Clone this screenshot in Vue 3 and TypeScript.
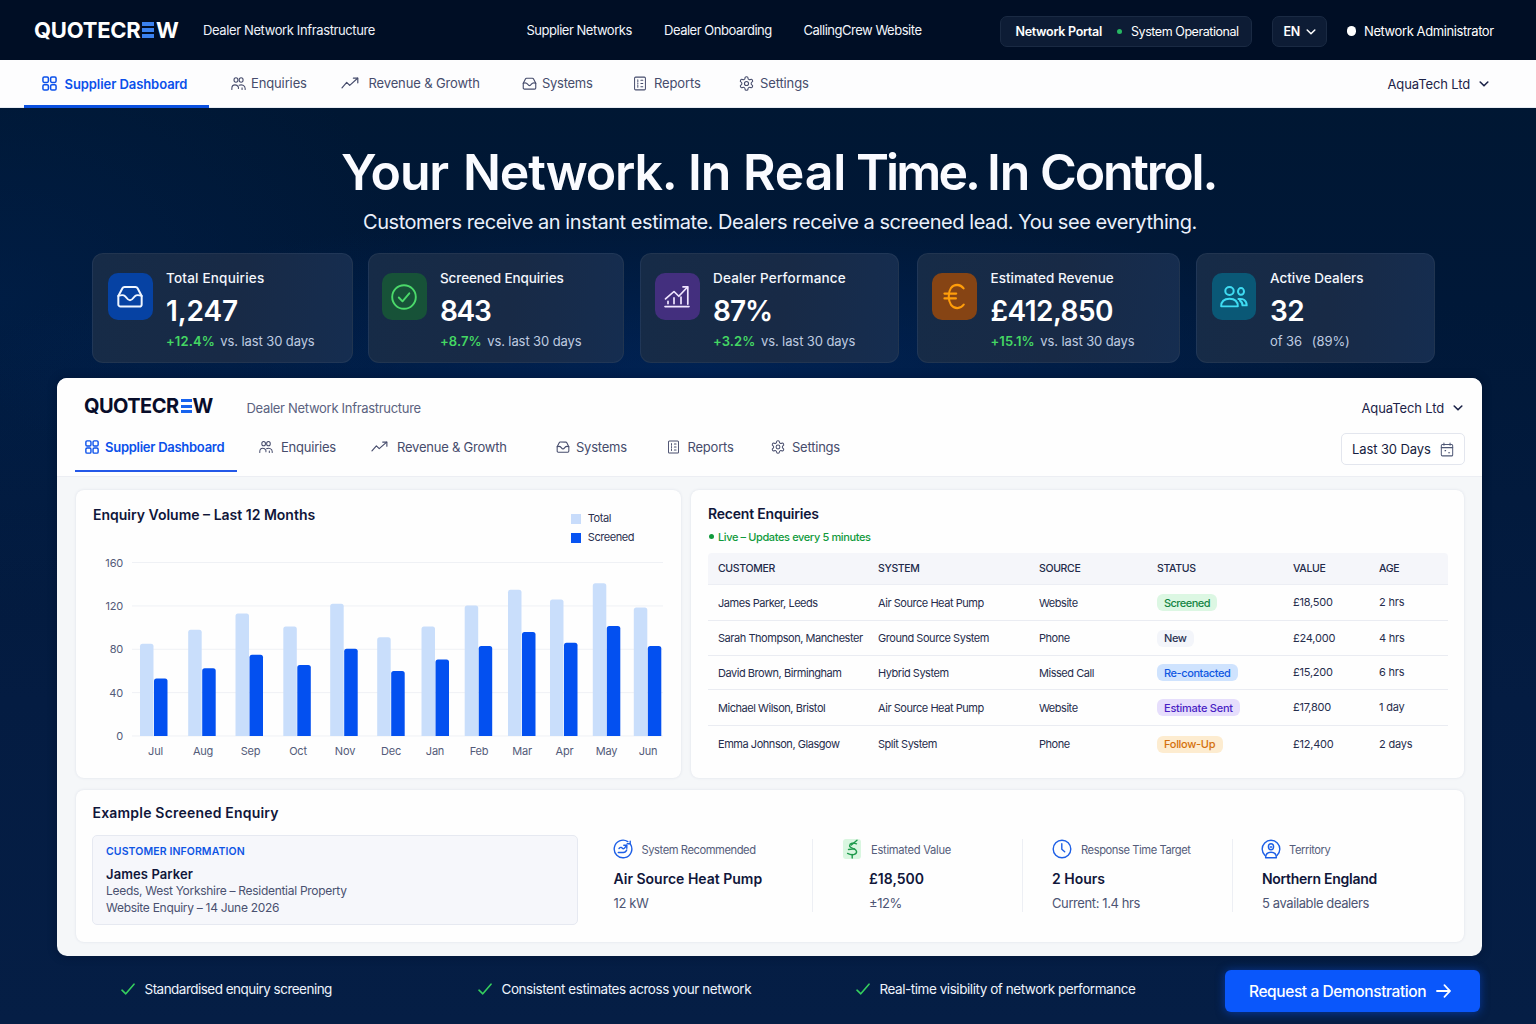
<script setup lang="ts">
import { h } from 'vue'

type IconName =
  | 'grid' | 'users' | 'trend' | 'inbox' | 'report' | 'gear' | 'chevron' | 'calendar'
  | 'tick' | 'check' | 'growth' | 'euro' | 'dealers' | 'system' | 'money' | 'clock' | 'territory' | 'arrow'

const icons: Record<IconName, { box: string; d: string[] }> = {
  grid: {
    box: '0 0 16 16',
    d: [
      'M2.4 1h3a1.4 1.4 0 0 1 1.4 1.4v3a1.4 1.4 0 0 1-1.4 1.4h-3A1.4 1.4 0 0 1 1 5.4v-3A1.4 1.4 0 0 1 2.4 1z',
      'M10.6 1h3A1.4 1.4 0 0 1 15 2.4v3a1.4 1.4 0 0 1-1.4 1.4h-3a1.4 1.4 0 0 1-1.4-1.4v-3A1.4 1.4 0 0 1 10.6 1z',
      'M2.4 9.2h3a1.4 1.4 0 0 1 1.4 1.4v3A1.4 1.4 0 0 1 5.4 15h-3A1.4 1.4 0 0 1 1 13.6v-3a1.4 1.4 0 0 1 1.4-1.4z',
      'M10.6 9.2h3a1.4 1.4 0 0 1 1.4 1.4v3a1.4 1.4 0 0 1-1.4 1.4h-3a1.4 1.4 0 0 1-1.4-1.4v-3a1.4 1.4 0 0 1 1.4-1.4z',
    ],
  },
  users: {
    box: '0 0 16 16',
    d: [
      'M5.3 1.8a2.100 2.400 0 1 0 0 4.800 2.100 2.400 0 1 0 0-4.800z',
      'M10.800 1.800a2.100 2.400 0 1 0 0 4.800 2.100 2.400 0 1 0 0-4.800z',
      'M.9 14.300v-1c0-2.200 1.300-3.800 3.400-3.800 1.800 0 2.800.7 3.600 2.200v1.600',
      'M8.600 9.900c2.700-1.100 6.500-.2 6.500 3.300v1.100',
      'M11.800 14.300v-1.600',
    ],
  },
  trend: { box: '0 0 18 12', d: ['M1 10.800 5.700 5.400 8.700 8.400 16.600 1.200', 'M12.400 1.200h4.400v4.600'] },
  inbox: {
    box: '0 0 24 24',
    d: [
      'M2 11.500 5.500 4.700A2 2 0 0 1 7.300 3.600h9.400a2 2 0 0 1 1.800 1.100L22 11.500V19a1.900 1.900 0 0 1-1.900 1.900H3.900A1.900 1.900 0 0 1 2 19z',
      'M2 11.500c4.500-1.600 5.700-.2 7 1.600 1.200 1.700 1.800 2.300 3 2.300s1.800-.6 3-2.300c1.300-1.800 2.500-3.200 7-1.600',
    ],
  },
  report: {
    box: '0 0 16 16',
    d: [
      'M3 1.200h10a1.200 1.200 0 0 1 1.200 1.200v11.200a1.200 1.200 0 0 1-1.200 1.200H3a1.200 1.200 0 0 1-1.200-1.200V2.400A1.200 1.200 0 0 1 3 1.200z',
      'M5.500 4v2M5.500 7.500v1M5.500 10v2M9 4.500h2.200M9 8h2.200M9 11.500h2.200',
    ],
  },
  gear: {
    box: '1 1 22 22',
    d: [
      'M12.220 2h-.44a2 2 0 0 0-2 2v.18a2 2 0 0 1-1 1.730l-.43.25a2 2 0 0 1-2 0l-.15-.08a2 2 0 0 0-2.730.73l-.22.38a2 2 0 0 0 .73 2.730l.15.1a2 2 0 0 1 1 1.720v.51a2 2 0 0 1-1 1.740l-.15.09a2 2 0 0 0-.73 2.730l.22.38a2 2 0 0 0 2.730.73l.15-.08a2 2 0 0 1 2 0l.43.25a2 2 0 0 1 1 1.730V20a2 2 0 0 0 2 2h.44a2 2 0 0 0 2-2v-.18a2 2 0 0 1 1-1.730l.43-.25a2 2 0 0 1 2 0l.15.08a2 2 0 0 0 2.730-.73l.22-.39a2 2 0 0 0-.73-2.730l-.15-.08a2 2 0 0 1-1-1.740v-.5a2 2 0 0 1 1-1.740l.15-.09a2 2 0 0 0 .73-2.730l-.22-.38a2 2 0 0 0-2.730-.73l-.15.08a2 2 0 0 1-2 0l-.43-.25a2 2 0 0 1-1-1.730V4a2 2 0 0 0-2-2z',
      'M12 9a3 3 0 1 0 0 6 3 3 0 1 0 0-6z',
    ],
  },
  chevron: { box: '0 0 10 6', d: ['M1.200 1 5 4.800 8.800 1'] },
  calendar: {
    box: '0 0 16 16',
    d: [
      'M2.800 2.600h10.400a1.300 1.300 0 0 1 1.300 1.300v9.600a1.300 1.300 0 0 1-1.300 1.300H2.800a1.300 1.300 0 0 1-1.300-1.300V3.900a1.300 1.300 0 0 1 1.300-1.300z',
      'M1.500 6h13M4.500 1v2.500M11.500 1v2.500M5.700 9.200h.8M9.800 11.400h1.200',
    ],
  },
  tick: { box: '0 0 14 12', d: ['M1 7.200 4.800 10.800 13 1.200'] },
  check: { box: '0 0 26 26', d: ['M13 1.200a11.800 11.800 0 1 0 0 23.600 11.800 11.800 0 1 0 0-23.600z', 'M7.800 13.500l3.700 3.800 6.800-8'] },
  growth: {
    box: '0 0 26 24',
    d: ['M1 22.500h24', 'M1.500 14.500 10 6.800l4.800 5L23.500 2', 'M19 2h4.800v18', 'M4 17v2.500M10 13.500v6M17 12.500v7'],
  },
  euro: { box: '0 0 24 28', d: ['M21.500 5.500A9.600 9.600 0 0 0 14.800 2C9.200 2 6 7 6 14s3.400 12 9 12c2.700 0 5-1.300 6.700-3.700', 'M1.500 11h12.300M1.500 16h12'] },
  dealers: {
    box: '0 0 28 24',
    d: [
      'M9.500 2a4.200 4.200 0 1 0 0 8.400 4.200 4.200 0 1 0 0-8.400z',
      'M21 3.200a3 3.500 0 1 0 0 7 3 3.500 0 1 0 0-7z',
      'M1.200 22.300c0-5.300 3.400-8 8.300-8s8.300 2.700 8.300 8z',
      'M18.500 14.600c4.400-.8 8.200 1.600 8.200 6.700h-4.200c0-2.300-.8-3.900-2.500-5',
    ],
  },
  system: {
    box: '0 0 20 20',
    d: ['M17.400 5.200A8.800 8.800 0 1 1 14.800 2.600', 'M5.300 13.500h5c2 0 2.800-1 3.400-2.600', 'M6 9.500c1.600-1.700 2.600-1.200 3.400-.2.800.9 1.700.5 2.700-1l1.400-2', 'M10.800 6.300h3v3', 'M14.200 4.800h3v-2.600'],
  },
  money: {
    box: '0 0 20 20',
    d: ['M14.500 4.800C11.500 3.600 7.800 4 7.600 6.800c-.1 2.900 7 2.200 7 6 0 3-4.800 3.900-9 1.600', 'M15 1.200 9.400 6M10.200 15.500v3.500', 'M6.500 10.500l6-.6'],
  },
  clock: { box: '0 0 20 20', d: ['M10 1.200a8.800 8.800 0 1 0 0 17.600 8.800 8.800 0 1 0 0-17.600z', 'M9.800 4.800v5.400l2.900 2.600'] },
  territory: {
    box: '0 0 20 20',
    d: [
      'M4 16.500a8.800 8.800 0 1 1 12 0',
      'M10 4.800a2.600 3 0 1 0 0 6 2.600 3 0 1 0 0-6z',
      'M4.600 18.800c0-3.600 2-5.600 5.400-5.600s5.400 2 5.400 5.600z',
      'M9.300 8h1.400',
    ],
  },
  arrow: { box: '0 0 16 14', d: ['M1 7h13.500', 'M9 1.200 14.800 7 9 12.800'] },
}

interface IconProps { name: IconName; w: number; t: number; y?: number }

// Line icon: w/y are the drawn size, t the stroke weight in box units.
const Icon = (p: IconProps) =>
  h(
    'svg',
    {
      class: 'line-icon',
      width: p.w, height: p.y ?? p.w, viewBox: icons[p.name].box, fill: 'none', stroke: 'currentColor',
      'stroke-width': p.t, 'stroke-linecap': 'round', 'stroke-linejoin': 'round', 'aria-hidden': 'true',
      preserveAspectRatio: 'none',
    },
    icons[p.name].d.map((d) => h('path', { d })),
  )
Icon.props = ['name', 'w', 'y', 't']

interface Tab { label: string; icon: IconName; w: number; y: number; t: number }
const tabs: Tab[] = [
  { label: 'Supplier Dashboard', icon: 'grid', w: 15, y: 15, t: 1.6 },
  { label: 'Enquiries', icon: 'users', w: 15, y: 15, t: 1.15 },
  { label: 'Revenue & Growth', icon: 'trend', w: 18, y: 12, t: 1.2 },
  { label: 'Systems', icon: 'inbox', w: 15, y: 15, t: 1.8 },
  { label: 'Reports', icon: 'report', w: 14, y: 15, t: 1.15 },
  { label: 'Settings', icon: 'gear', w: 15, y: 15, t: 1.6 },
]

interface Stat { key: string; icon: IconName; w: number; y: number; t: number; title: string; value: string; delta?: string; note: string }
const stats: Stat[] = [
  { key: 'total', icon: 'inbox', w: 28, y: 27, t: 1.7, title: 'Total Enquiries', value: '1,247', delta: '+12.4%', note: 'vs. last 30 days' },
  { key: 'screened', icon: 'check', w: 26, y: 26, t: 1.9, title: 'Screened Enquiries', value: '843', delta: '+8.7%', note: 'vs. last 30 days' },
  { key: 'performance', icon: 'growth', w: 26, y: 23, t: 1.7, title: 'Dealer Performance', value: '87%', delta: '+3.2%', note: 'vs. last 30 days' },
  { key: 'revenue', icon: 'euro', w: 23, y: 27, t: 2.2, title: 'Estimated Revenue', value: '£412,850', delta: '+15.1%', note: 'vs. last 30 days' },
  { key: 'dealers', icon: 'dealers', w: 28, y: 23, t: 2, title: 'Active Dealers', value: '32', note: '(89%)' },
]

interface Month { label: string; x: number; tx: number; total: number; screened: number }
const months: Month[] = [
  { label: 'Jul', x: 8, tx: 23.5, total: 85, screened: 53 },
  { label: 'Aug', x: 56.2, tx: 71, total: 98, screened: 62.5 },
  { label: 'Sep', x: 103.5, tx: 118.5, total: 113, screened: 75 },
  { label: 'Oct', x: 151.3, tx: 166, total: 101, screened: 65.5 },
  { label: 'Nov', x: 198.2, tx: 213, total: 122, screened: 80.5 },
  { label: 'Dec', x: 245.2, tx: 259, total: 91, screened: 60 },
  { label: 'Jan', x: 289.5, tx: 303, total: 101, screened: 70.5 },
  { label: 'Feb', x: 332.7, tx: 347, total: 120.5, screened: 83 },
  { label: 'Mar', x: 376, tx: 390, total: 135, screened: 96 },
  { label: 'Apr', x: 418, tx: 432.5, total: 126, screened: 86 },
  { label: 'May', x: 460.8, tx: 474.5, total: 141, screened: 101.5 },
  { label: 'Jun', x: 501.8, tx: 516, total: 118.5, screened: 83 },
]
const baseY = 193
const unit = 1.084
const ticks = [160, 120, 80, 40, 0]
const yOf = (v: number) => baseY - v * unit
const bar = (x: number, v: number) => {
  const top = yOf(v)
  return `M${x} ${baseY}V${top + 2.5}q0-2.5 2.5-2.5h8.5q2.5 0 2.5 2.5V${baseY}z`
}

const columns = ['Customer', 'System', 'Source', 'Status', 'Value', 'Age']
const rows = [
  { customer: 'James Parker, Leeds', system: 'Air Source Heat Pump', source: 'Website', status: 'Screened', tone: 'green', value: '£18,500', age: '2 hrs' },
  { customer: 'Sarah Thompson, Manchester', system: 'Ground Source System', source: 'Phone', status: 'New', tone: 'grey', value: '£24,000', age: '4 hrs' },
  { customer: 'David Brown, Birmingham', system: 'Hybrid System', source: 'Missed Call', status: 'Re-contacted', tone: 'blue', value: '£15,200', age: '6 hrs' },
  { customer: 'Michael Wilson, Bristol', system: 'Air Source Heat Pump', source: 'Website', status: 'Estimate Sent', tone: 'violet', value: '£17,800', age: '1 day' },
  { customer: 'Emma Johnson, Glasgow', system: 'Split System', source: 'Phone', status: 'Follow-Up', tone: 'orange', value: '£12,400', age: '2 days' },
]

const facts: { icon: IconName; label: string; title: string; sub: string; key: string }[] = [
  { key: 'system', icon: 'system', label: 'System Recommended', title: 'Air Source Heat Pump', sub: '12 kW' },
  { key: 'money', icon: 'money', label: 'Estimated Value', title: '£18,500', sub: '±12%' },
  { key: 'clock', icon: 'clock', label: 'Response Time Target', title: '2 Hours', sub: 'Current: 1.4 hrs' },
  { key: 'territory', icon: 'territory', label: 'Territory', title: 'Northern England', sub: '5 available dealers' },
]

const promises = [
  'Standardised enquiry screening',
  'Consistent estimates across your network',
  'Real-time visibility of network performance',
]
const headline = ['Your', 'Network.', 'In', 'Real', 'Time.', 'In', 'Control.']
</script>

<template>
  <div class="page">
    <header class="topbar">
      <div class="logo logo-top"><span>QUOTECR</span><i class="bars"><b /><b /><b /></i><span>W</span></div>
      <span class="tagline">Dealer Network Infrastructure</span>
      <nav class="links">
        <a>Supplier Networks</a><a>Dealer Onboarding</a><a>CallingCrew Website</a>
      </nav>
      <div class="pill status"><strong>Network Portal</strong><i class="dot" /><span>System Operational</span></div>
      <div class="pill lang"><strong>EN</strong><Icon name="chevron" :w="10" :y="6" :t="1.5" /></div>
      <div class="admin"><i class="avatar" /><span>Network Administrator</span></div>
    </header>

    <div class="subnav">
      <nav class="tabs tabs-top">
        <a v-for="(t, i) in tabs" :key="t.label" class="tab" :class="{ active: i === 0 }">
          <span class="glyph"><Icon :name="t.icon" :w="t.w" :y="t.y" :t="t.t" /></span><span class="label">{{ t.label }}</span>
        </a>
      </nav>
      <div class="account"><span>AquaTech Ltd</span><Icon name="chevron" :w="10" :y="6" :t="1.6" /></div>
    </div>

    <main>
      <h1><span v-for="(w, i) in headline" :key="i">{{ w }}</span></h1>
      <p class="lead">Customers receive an instant estimate. Dealers receive a screened lead. You see everything.</p>

      <section class="stats">
        <article v-for="s in stats" :key="s.key" class="stat" :class="s.key">
          <div class="tile"><Icon :name="s.icon" :w="s.w" :y="s.y" :t="s.t" /></div>
          <div class="stat-text">
            <h2>{{ s.title }}</h2>
            <div class="value">{{ s.value }}</div>
            <div class="delta"><b v-if="s.delta">{{ s.delta }}</b><span v-else class="of">of 36</span><span>{{ s.note }}</span></div>
          </div>
        </article>
      </section>

      <section class="panel">
        <div class="panel-head">
          <div class="panel-brand">
            <div class="logo logo-panel"><span>QUOTECR</span><i class="bars"><b /><b /><b /></i><span>W</span></div>
            <span class="tagline">Dealer Network Infrastructure</span>
            <div class="account"><span>AquaTech Ltd</span><Icon name="chevron" :w="10" :y="6" :t="1.6" /></div>
          </div>
          <div class="panel-nav">
            <nav class="tabs tabs-panel">
              <a v-for="(t, i) in tabs" :key="t.label" class="tab" :class="{ active: i === 0 }">
                <span class="glyph"><Icon :name="t.icon" :w="t.w - 1" :y="t.y - 1" :t="t.t" /></span><span class="label">{{ t.label }}</span>
              </a>
            </nav>
            <button class="range"><span>Last 30 Days</span><Icon name="calendar" :w="14" :y="15" :t="1.15" /></button>
          </div>
        </div>

        <div class="panel-body">
          <div class="row-top">
            <article class="card chart-card">
              <div class="chart-head">
                <h3>Enquiry Volume – Last 12 Months</h3>
                <ul class="legend"><li><i class="light" />Total</li><li><i class="dark" />Screened</li></ul>
              </div>
              <svg class="chart" width="587" height="215" viewBox="-38 0 587 215" role="img" aria-label="Enquiry volume by month">
                <g v-for="t in ticks" :key="t">
                  <line x1="0" x2="531" :y1="yOf(t)" :y2="yOf(t)" class="grid-line" />
                  <text x="-9" :y="yOf(t) + 4" text-anchor="end" class="axis">{{ t }}</text>
                </g>
                <g v-for="m in months" :key="m.label">
                  <path :d="bar(m.x, m.total)" class="bar-total" />
                  <path :d="bar(m.x + 14, m.screened)" class="bar-screened" />
                  <text :x="m.tx" y="212" text-anchor="middle" class="axis">{{ m.label }}</text>
                </g>
              </svg>
            </article>

            <article class="card recent">
              <h3>Recent Enquiries</h3>
              <div class="live"><i />Live – Updates every 5 minutes</div>
              <div class="table">
                <div class="tr th"><span v-for="c in columns" :key="c">{{ c.toUpperCase() }}</span></div>
                <div v-for="r in rows" :key="r.customer" class="tr td">
                  <span>{{ r.customer }}</span><span>{{ r.system }}</span><span>{{ r.source }}</span>
                  <span><em class="badge" :class="r.tone">{{ r.status }}</em></span>
                  <span class="num">{{ r.value }}</span><span class="age">{{ r.age }}</span>
                </div>
              </div>
            </article>
          </div>

          <article class="card example">
            <h3>Example Screened Enquiry</h3>
            <div class="example-row">
              <div class="info">
                <div class="info-tag">CUSTOMER INFORMATION</div>
                <div class="info-name">James Parker</div>
                <div class="info-line">Leeds, West Yorkshire – Residential Property</div>
                <div class="info-line">Website Enquiry – 14 June 2026</div>
              </div>
              <div v-for="f in facts" :key="f.key" class="fact" :class="f.key">
                <div class="fact-label"><i class="fact-icon"><Icon :name="f.icon" :w="20" :y="20" :t="1.4" /></i><span>{{ f.label }}</span></div>
                <div class="fact-title">{{ f.title }}</div>
                <div class="fact-sub">{{ f.sub }}</div>
              </div>
            </div>
          </article>
        </div>
      </section>
    </main>

    <footer>
      <div v-for="p in promises" :key="p" class="promise"><Icon name="tick" :w="14" :y="12" :t="1.6" /><span>{{ p }}</span></div>
      <button class="cta"><span>Request a Demonstration</span><Icon name="arrow" :w="15" :y="14" :t="1.8" /></button>
    </footer>
  </div>
</template>

<style>
body { margin: 0; }
.line-icon { display: block; flex: none; }
</style>

<style scoped>
* { box-sizing: border-box; }
h1, h2, h3, p, ul { margin: 0; padding: 0; }
i, em { font-style: normal; }
button { font: inherit; padding: 0; }

.page {
  width: 1536px; height: 1024px; overflow: hidden;
  font-family: Inter, "Liberation Sans", sans-serif; color: #fff; white-space: nowrap;
  background:
    radial-gradient(ellipse 720px 160px at 700px 372px, rgba(0, 42, 104, .55), transparent),
    radial-gradient(ellipse 420px 320px at 0 300px, rgba(0, 38, 90, .35), transparent),
    linear-gradient(180deg, #001733 100px, #001838 300px, #041c42 700px, #051e45 1024px);
  display: flex; flex-direction: column;
}

/* top bar */
.topbar { height: 60px; flex: none; display: flex; align-items: center; padding: 3px 0 0 34px; background: #000e25; font-size: 13px; }
.logo { display: flex; align-items: center; font-weight: 700; flex: none; }
.logo .bars { display: flex; flex-direction: column; justify-content: space-between; }
.logo .bars b { display: block; background: #3b82f0; }
.logo-top { width: 170px; font-size: 22px; letter-spacing: -.25px; line-height: 26px; padding-bottom: 3px; }
.logo-top .bars { width: 11.5px; height: 15.5px; margin: 0 2px 0 2px; }
.logo-top .bars b { height: 3.5px; }
.topbar .tagline { width: 323.5px; margin-left: -1px; letter-spacing: -.38px; color: #eef2fa; padding-bottom: 3px; }
.links { display: grid; grid-template-columns: 137.500px 139.500px 196px; color: #f3f6fc; letter-spacing: -.48px; padding-bottom: 3px; }
.pill { display: flex; align-items: center; height: 31px; border-radius: 7px; background: #0d1c35; border: 1px solid #1a2a43; font-size: 12.5px; flex: none; }
.pill strong { font-weight: 600; }
.status { width: 252px; padding-left: 15px; letter-spacing: -.44px; }
.status strong { width: 101px; letter-spacing: -.3px; }
.dot { width: 5.5px; height: 5.5px; border-radius: 50%; background: #27b863; margin-right: 9px; }
.lang { width: 55px; margin-left: 20px; padding-left: 11px; gap: 6px; }
.lang strong { letter-spacing: -.3px; }
.admin { display: flex; align-items: center; margin-left: 20px; letter-spacing: -.41px; padding-bottom: 1px; }
.avatar { width: 9.5px; height: 9.5px; border-radius: 50%; background: #fff; margin-right: 8px; }

/* tab strips */
.subnav { height: 48px; flex: none; background: #fdfdfe; display: flex; padding-left: 23.5px; border-bottom: 1px solid #e8ecf3; }
.tabs { display: grid; font-size: 13px; color: #464c6c; }
.tab { display: flex; align-items: center; }
.tab .glyph { display: block; flex: none; }
.tab.active { color: #0a50ea; font-weight: 600; }
.tabs-top { grid-template-columns: 207px 110px 181px 111.500px 106px 648.500px; height: 48px; }
.tabs-top .tab { padding-bottom: 2px; }
.tabs-top .active { width: 185.5px; padding: 2px 0 0 18px; border-bottom: 3.5px solid #0a50e0; }
.tabs-top .glyph { width: 20.5px; }
.tabs-top .active .glyph { width: 23px; }
.tabs-top .tab:nth-child(3) .glyph { width: 28px; }
.tabs-top .tab:nth-child(5) .glyph, .tabs-top .tab:nth-child(6) .glyph { width: 21px; }
.tabs-top .label { letter-spacing: -.13px; }
.tabs-top .active .label { letter-spacing: -.07px; }
.tabs-top .tab:nth-child(4) .label { letter-spacing: -.28px; }
.account { display: flex; align-items: center; gap: 8.5px; font-size: 13px; letter-spacing: -.1px; color: #1c2348; }
.subnav .account { padding-top: 1px; }

/* hero */
main { height: 848px; flex: none; padding: 34px 54px 0 57px; }
h1 { margin-left: 284px; display: grid; grid-template-columns: 122px 225px 55px 113px 131px 53px 175px; font-size: 50px; line-height: 60px; font-weight: 600; letter-spacing: -1.15px; color: #fafbff; }
h1 span:nth-child(4) { letter-spacing: -.2px; }
h1 span:nth-child(5) { letter-spacing: -2.9px; }
h1 span:nth-child(7) { letter-spacing: -2.2px; }
.lead { margin: 7.5px 0 0 306px; font-size: 20px; line-height: 25px; letter-spacing: -.45px; color: #eaf0fb; }

/* stat cards */
.stats { margin: 18.5px 0 0 35px; height: 110px; display: flex; }
.stat { display: flex; flex: none; border-radius: 11px; border: 1px solid rgba(255, 255, 255, .05); background: linear-gradient(100deg, #162b47, #182a46 55%, #152d50); }
.stat.total { width: 261px; padding-left: 15px; }
.stat.screened { width: 256px; margin-left: 15px; padding-left: 13px; }
.stat.performance { width: 259px; margin-left: 16px; padding-left: 14px; }
.stat.revenue { width: 263px; margin-left: 17.500px; padding-left: 14.500px; }
.stat.dealers { width: 238.500px; margin-left: 16.500px; padding-left: 14.500px; }
.tile { width: 44.5px; height: 47px; margin-top: 19px; border-radius: 10px; display: flex; align-items: center; justify-content: center; flex: none; }
.total .tile { background: #0642a3; color: #f0f6ff; }
.screened .tile { background: #175238; color: #4bd96a; }
.performance .tile { background: #432f7e; color: #f0e6ff; }
.revenue .tile { background: #864414; color: #ff9d0a; }
.dealers .tile { background: #0a5876; color: #3fdcf2; }
.stat-text { margin-left: 13.5px; padding-top: 14px; }
.dealers .stat-text, .revenue .stat-text { margin-left: 14px; }
.stat h2 { font-size: 13.5px; font-weight: 500; line-height: 21px; color: #f4f7fd; }
.total h2, .performance h2 { letter-spacing: .2px; }
.screened h2 { letter-spacing: -.1px; }
.value { font-size: 28px; font-weight: 600; line-height: 34px; margin-top: 4.5px; letter-spacing: -.55px; }
.total .value { letter-spacing: -.1px; }
.screened .value { letter-spacing: -1.3px; }
.performance .value { letter-spacing: -1px; }
.delta { display: flex; gap: 5.5px; font-size: 13px; line-height: 18px; margin-top: 4.5px; letter-spacing: -.1px; color: #bfcbe0; }
.delta b { font-weight: 600; color: #44d763; letter-spacing: .1px; }
.delta .of { margin-right: 4.5px; }

/* product panel */
.panel { margin-top: 15px; width: 1425px; height: 578px; border-radius: 10px; overflow: hidden; background: #f5f7f9; box-shadow: 0 0 10px rgba(0, 8, 30, .35); }
.panel-head { height: 98.5px; background: #fefefe; border-bottom: 1px solid #eceef3; }
.panel-brand { display: flex; align-items: center; height: 48px; padding: 12px 0 0 27px; }
.logo-panel { width: 162.5px; font-size: 20px; line-height: 24px; letter-spacing: -.55px; color: #080d2a; padding-bottom: 4px; }
.logo-panel .bars { width: 11px; height: 14.5px; margin: 0 1px 0 2px; }
.logo-panel .bars b { height: 3px; background: #1763ee; }
.panel-brand .tagline { width: 1115px; font-size: 13px; letter-spacing: -.3px; color: #5b6280; }
.panel-nav { display: flex; align-items: flex-start; }
.tabs-panel { grid-template-columns: 184px 112px 185px 110.5px 104.500px 570px; padding-left: 18px; height: 46px; color: #464c6c; }
.tabs-panel .tab { padding-bottom: 4.5px; }
.tabs-panel .active { width: 162px; padding: 0 0 2.500px 10px; border-bottom: 2px solid #2458e8; color: #0a50ea; }
.tabs-panel .glyph { width: 22px; }
.tabs-panel .active .glyph { width: 20px; }
.tabs-panel .tab:nth-child(3) .glyph { width: 26px; }
.tabs-panel .tab:nth-child(4) .glyph { width: 20px; }
.tabs-panel .tab:nth-child(5) .glyph, .tabs-panel .tab:nth-child(6) .glyph { width: 21px; }
.tabs-panel .label { letter-spacing: -.22px; }
.tabs-panel .active .label { letter-spacing: -.27px; }
.range { display: flex; align-items: center; width: 123.5px; height: 32px; margin-top: 7px; padding-left: 10px; gap: 9px; border: 1px solid #e3e6ee; border-radius: 5px; background: #fff; font-size: 13px; letter-spacing: -.1px; color: #161d40; }
.range svg { color: #4f5876; }

.panel-body { padding: 13.5px 18px 0 19px; }
.row-top { display: grid; grid-template-columns: 605px 773px; column-gap: 10px; height: 288px; }
.card { background: #fefefe; border-radius: 8px; box-shadow: 0 0 3px rgba(60, 75, 120, .13); }
h3 { font-size: 14px; line-height: 20px; font-weight: 600; color: #10163a; }
.chart-head { display: flex; justify-content: space-between; height: 62px; padding: 14.5px 47px 0 17px; }
.legend { list-style: none; font-size: 11px; line-height: 19px; letter-spacing: -.45px; color: #2b3150; margin-top: 4.5px; }
.legend li { display: flex; align-items: center; gap: 7px; }
.legend i { width: 10px; height: 10px; }
.legend .light { background: #c8dcfb; }
.legend .dark { background: #0753f2; }
.chart { display: block; margin: -9.5px 0 0 18px; }
.grid-line { stroke: #eff1f5; stroke-width: 1; }
.axis { font-size: 11px; fill: #535b79; letter-spacing: -.2px; }
.bar-total { fill: #c9defb; }
.bar-screened { fill: #0350f0; }

.recent { padding: 13.5px 16.5px 0 17px; }
.recent h3 { letter-spacing: -.2px; }
.live { display: flex; align-items: center; gap: 4px; height: 26.5px; font-size: 11px; font-weight: 500; letter-spacing: -.38px; color: #109a3c; }
.live i { width: 5px; height: 5px; border-radius: 50%; background: #109a3c; margin-left: 1px; }
.table { margin-top: 3px; }
.tr { display: grid; grid-template-columns: 160px 161px 118px 136px 86px 69px; align-items: center; padding-left: 10px; }
.th { height: 31.5px; padding-top: 1px; background: #f5f6fa; border-bottom: 1px solid #eceef4; border-radius: 4px 4px 0 0; font-size: 10.5px; font-weight: 500; letter-spacing: -.34px; color: #222949; }
.td { font-size: 11px; letter-spacing: -.46px; color: #262d4d; border-bottom: 1px solid #eaecf2; height: 36px; padding-top: 1px; }
.td:nth-child(3) { height: 35px; }
.td:nth-child(4) { height: 34px; }
.td:last-child { border-bottom: 0; }
.num { letter-spacing: -.23px; padding-bottom: 1px; }
.age { letter-spacing: -.2px; padding-bottom: 1px; }
.badge { display: inline-flex; align-items: center; height: 17px; padding: 0 7.5px 0 7px; border-radius: 6px; font-weight: 500; letter-spacing: -.42px; }
.badge.green { background: #dcf7e3; color: #148544; letter-spacing: -.55px; }
.badge.grey { background: #f3f5fa; color: #2c3354; }
.badge.blue { background: #cfe3fe; color: #1058e2; }
.badge.violet { background: #e6defc; color: #4a1fc4; letter-spacing: -.25px; }
.badge.orange { background: #fdecd0; color: #d4700c; letter-spacing: -.3px; }

.example { height: 152px; margin-top: 11.5px; padding: 13.5px 0 0 16px; }
.example h3 { letter-spacing: .2px; margin-left: .5px; }
.example-row { display: flex; margin-top: 12px; }
.info { width: 485.5px; height: 89.5px; border: 1px solid #e6e9f1; border-radius: 5px; background: #f6f7fb; padding: 7.5px 0 0 13px; }
.info-tag { font-size: 10.5px; font-weight: 600; line-height: 16px; letter-spacing: .1px; color: #0e55e4; }
.info-name { font-size: 13px; font-weight: 600; line-height: 18px; margin-top: 5.5px; letter-spacing: .1px; color: #10163a; }
.info-line { font-size: 12px; line-height: 16.5px; letter-spacing: -.29px; color: #4a5170; }
.fact { height: 73px; margin-top: 4px; border-right: 1px solid #edeff4; }
.fact.system { width: 235.5px; padding-left: 35px; }
.fact.money { width: 210px; padding-left: 30px; }
.fact.clock { width: 210px; padding-left: 29px; }
.fact.territory { border-right: 0; padding-left: 28px; }
.fact-label { display: flex; align-items: center; height: 20px; font-size: 11.2px; letter-spacing: -.44px; color: #555d7b; }
.fact-label span { padding-top: 2px; }
.fact-icon { color: #1d5fe6; width: 29px; flex: none; }
.fact.territory .fact-icon { width: 28px; }
.fact.money .fact-icon { display: flex; justify-content: center; width: 18px; margin-right: 10px; border-radius: 3px; background: #d9f6e0; color: #1f9a4c; }
.fact.money .fact-label { letter-spacing: -.3px; }
.fact-title { margin-top: 10px; font-size: 14px; line-height: 20px; font-weight: 600; letter-spacing: 0; color: #10163a; margin-left: 1px; }
.fact.territory .fact-title { letter-spacing: -.28px; }
.fact-sub { margin-top: 5px; font-size: 13px; line-height: 18px; letter-spacing: -.4px; color: #4d5574; margin-left: 1px; }
.fact.money .fact-title, .fact.money .fact-sub { margin-left: 26px; }
.fact.clock .fact-title, .fact.clock .fact-sub { margin-left: 0; }

/* footer */
footer { height: 68px; flex: none; padding: 14px 0 0 121px; display: grid; grid-template-columns: 357px 378px 369px 255px; }
.promise { display: flex; align-items: center; height: 38px; gap: 9.5px; font-size: 13.5px; letter-spacing: -.45px; color: #eef3fc; }
.promise:first-child { letter-spacing: -.52px; }
.promise svg { color: #35cf5e; }
.cta { display: flex; align-items: center; height: 42px; border: 0; border-radius: 6px; padding-left: 24px; gap: 9.5px; background: #0a57fb; color: #fff; font-size: 15.5px; font-weight: 500; letter-spacing: -.41px; box-shadow: 0 1px 10px rgba(8, 84, 250, .5); }
</style>
